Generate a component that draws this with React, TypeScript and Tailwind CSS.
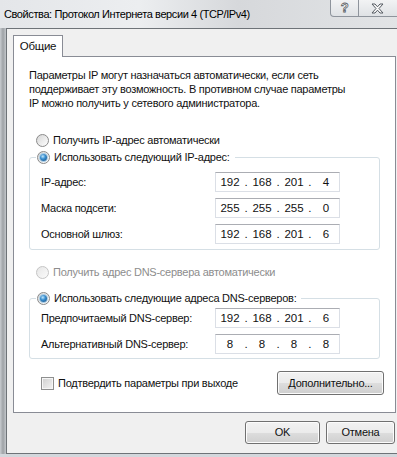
import React from "react";

function Radio({ checked = false, disabled = false }: { checked?: boolean; disabled?: boolean }) {
  return (
    <span
      className={
        "relative flex items-center justify-center w-[13px] h-[13px] rounded-full border shrink-0 " +
        (disabled
          ? "border-[#c5c5c5] bg-[linear-gradient(135deg,#e6e6e6,#fbfbfb)]"
          : "border-[#8a8a8a] bg-[linear-gradient(135deg,#d6d6d6,#ffffff)]")
      }
    >
      {checked && (
        <span className="w-[7px] h-[7px] rounded-full bg-[radial-gradient(circle_at_40%_35%,#bfe6fb_0%,#3a8fd0_40%,#124a7d_100%)] shadow-[0_0_0_1px_#a8cbe4]" />
      )}
    </span>
  );
}

function IPBox({ v }: { v: string[] }) {
  return (
    <div className="flex items-center w-[125px] h-[20px] border border-[#dbdfe6] border-t-[#abadb3] bg-white pl-[1px] text-[11.5px] leading-[14px] tracking-normal">
      {v.map((o, i) => (
        <React.Fragment key={i}>
          <span className="w-[27px] text-center">{o}</span>
          {i < 3 && <span className="w-[6px] text-center">.</span>}
        </React.Fragment>
      ))}
    </div>
  );
}

function Row({ label, v }: { label: string; v: string[] }) {
  return (
    <div className="flex items-center h-[20px] pl-[11px]">
      <span className="w-[174px]">{label}</span>
      <IPBox v={v} />
    </div>
  );
}

function Btn({ children, w }: { children: React.ReactNode; w: string }) {
  return (
    <div
      className={
        "flex items-center justify-center h-[23px] rounded-[3px] border border-[#707070] shadow-[inset_0_0_0_1px_#fcfcfc] bg-[linear-gradient(#f2f2f2_0%,#ebebeb_50%,#dddddd_51%,#cfcfcf_100%)] " +
        w
      }
    >
      {children}
    </div>
  );
}

export default function App() {
  return (
    <div className="w-[397px] h-[457px] overflow-hidden bg-[#d3d7dc] font-['Liberation_Sans',Arial,sans-serif] text-[11px] tracking-[-0.25px] text-[#111]">
      {/* Title bar */}
      <div className="h-[28px] flex items-start bg-[linear-gradient(90deg,#e4e6e9_0%,#eceef0_35%,#d6d8db_60%,#e2e4e6_100%)]">
        <div className="pl-[4px] pt-[7px] text-[11px] tracking-[-0.4px] leading-[15px] text-black whitespace-nowrap">
          Свойства: Протокол Интернета версии 4 (TCP/IPv4)
        </div>
        <div className="ml-auto shrink-0 flex h-[17px] mr-[-12px] border border-t-0 border-[#8e949c] rounded-bl-[4px] bg-[linear-gradient(#f2f3f4,#dfe2e5)]">
          <div className="w-[27px] flex items-center justify-center text-[13px] font-bold text-white [-webkit-text-stroke:0.8px_#5a5f65]">
            ?
          </div>
          <div className="w-[50px] border-l border-[#8e949c] flex items-center pl-[12px]">
            <svg width="13" height="11" viewBox="0 0 13 11">
              <path
                d="M1 1 H4 L6.5 3.8 L9 1 H12 L8 5.5 L12 10 H9 L6.5 7.2 L4 10 H1 L5 5.5 Z"
                fill="#fafafa"
                stroke="#555b62"
                strokeWidth="1"
                strokeLinejoin="round"
              />
            </svg>
          </div>
        </div>
      </div>

      {/* Body */}
      <div className="flex">
        <div className="w-[6px] h-[426px] bg-[linear-gradient(90deg,#c8ccd0,#9ea2a6_50%,#c3c7cb)]" />
        <div className="flex-1 h-[426px] border-l border-t border-b border-[#6e7378] bg-[#f0f0f0] flex flex-col">
          {/* Tab */}
          <div className="ml-[6px] mt-[6px] w-[50px] h-[22px] -mb-px relative z-10 bg-white border border-b-0 border-[#898c95] flex items-center justify-center text-[11.5px]">
            Общие
          </div>
          {/* Panel */}
          <div className="ml-[6px] w-[383px] h-[357px] bg-white border border-[#898c95] flex flex-col">
            <div className="pl-[15px] pt-[11px] leading-[14px]">
              Параметры IP могут назначаться автоматически, если сеть
              <br />
              поддерживает эту возможность. В противном случае параметры
              <br />
              IP можно получить у сетевого администратора.
            </div>

            <div className="mt-[23px] pl-[22px] flex items-center gap-[4px] h-[14px]">
              <Radio />
              <span>Получить IP-адрес автоматически</span>
            </div>

            <div className="mt-[10px] mx-[15px] border border-[#d5dfe5] rounded-[3px] pb-[5px]">
              <div className="-mt-[9px] ml-[6px] w-fit h-[16px] bg-white pl-[1px] pr-[5px] flex items-center gap-[4px]">
                <Radio checked />
                <span>Использовать следующий IP-адрес:</span>
              </div>
              <div className="mt-[7px] flex flex-col gap-[6px]">
                <Row label="IP-адрес:" v={["192", "168", "201", "4"]} />
                <Row label="Маска подсети:" v={["255", "255", "255", "0"]} />
                <Row label="Основной шлюз:" v={["192", "168", "201", "6"]} />
              </div>
            </div>

            <div className="mt-[15px] pl-[22px] flex items-center gap-[4px] h-[14px] text-[#8d8d8d]">
              <Radio disabled />
              <span>Получить адрес DNS-сервера автоматически</span>
            </div>

            <div className="mt-[19px] mx-[15px] border border-[#d5dfe5] rounded-[3px] pb-[4px]">
              <div className="-mt-[9px] ml-[6px] w-fit h-[16px] bg-white pl-[1px] pr-[5px] flex items-center gap-[4px]">
                <Radio checked />
                <span>Использовать следующие адреса DNS-серверов:</span>
              </div>
              <div className="mt-[2px] flex flex-col gap-[6px]">
                <Row label="Предпочитаемый DNS-сервер:" v={["192", "168", "201", "6"]} />
                <Row label="Альтернативный DNS-сервер:" v={["8", "8", "8", "8"]} />
              </div>
            </div>

            <div className="mt-[12px] flex items-center h-[24px] pl-[27px] pr-[11px]">
              <span className="w-[13px] h-[13px] border border-[#8e8f8f] bg-[linear-gradient(135deg,#cfcfcf,#f4f4f4)] shadow-[inset_0_0_0_1px_#f6f6f6]" />
              <span className="ml-[4px]">Подтвердить параметры при выходе</span>
              <Btn w="ml-auto w-[107px] h-[24px]">Дополнительно...</Btn>
            </div>
          </div>

          {/* Bottom buttons */}
          <div className="mt-[8px] flex pl-[238px] gap-[6px]">
            <Btn w="w-[75px]">OK</Btn>
            <Btn w="w-[69px]">Отмена</Btn>
          </div>
        </div>
      </div>
    </div>
  );
}
